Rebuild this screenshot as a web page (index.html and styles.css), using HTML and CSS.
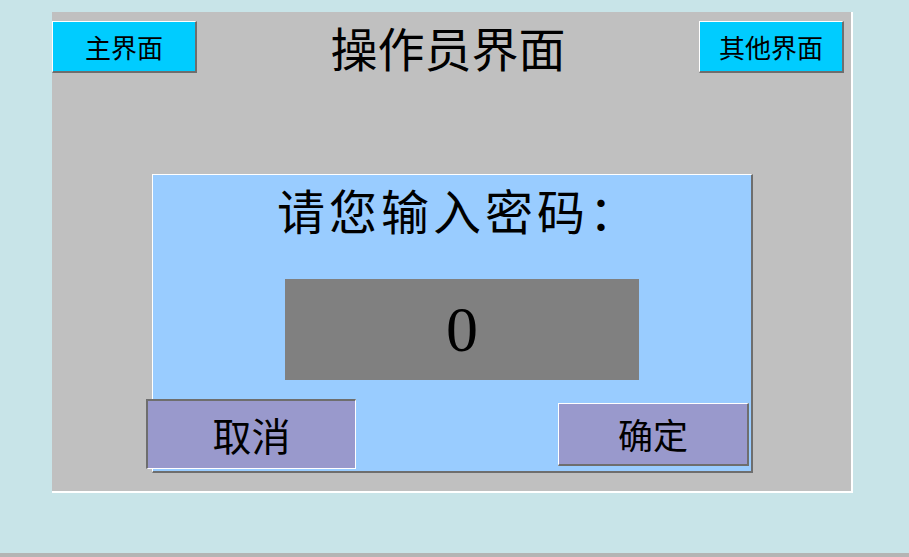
FILE: index.html
```html
<!DOCTYPE html>
<html lang="zh-CN">
<head>
<meta charset="utf-8">
<title>操作员界面</title>
<link rel="stylesheet" href="styles.css">
</head>
<body>
<div class="screen">
  <div class="panel">
    <div class="header">
      <button class="nav-btn">主界面</button>
      <h1 class="title">操作员界面</h1>
      <button class="nav-btn">其他界面</button>
    </div>
    <div class="dialog">
      <div class="dialog-title">请您输入密码：</div>
      <div class="pwd-box">0</div>
      <div class="actions">
        <button class="btn btn-cancel">取消</button>
        <button class="btn btn-ok">确定</button>
      </div>
    </div>
  </div>
</div>
<div class="footer"></div>
</body>
</html>
```
FILE: styles.css
```css
html, body {
  margin: 0;
  padding: 0;
}
body {
  background: #C8E4E8;
  width: 909px;
  height: 557px;
  overflow: hidden;
  font-family: "Noto Sans CJK SC", "Liberation Serif", serif;
  color: #000;
}
.screen {
  height: 553px;
  box-sizing: border-box;
  padding: 12px 0 0 52px;
}
.footer {
  height: 4px;
  background: #B4B4B4;
}
.panel {
  box-sizing: border-box;
  width: 801px;
  height: 481px;
  background: #C0C0C0;
  border-right: 2px solid #fff;
  border-bottom: 2px solid #fff;
  padding: 9px 7px 0 0;
}
.header {
  display: flex;
  justify-content: space-between;
  align-items: center;
  height: 52px;
}
.nav-btn {
  box-sizing: border-box;
  width: 145px;
  height: 52px;
  margin: 0;
  padding: 0;
  background: #00CCFF;
  border-top: 1px solid #fff;
  border-left: 1px solid #fff;
  border-right: 2px solid #6e6e6e;
  border-bottom: 2px solid #6e6e6e;
  font-family: "Noto Sans CJK SC", sans-serif;
  font-size: 26px;
  line-height: 1;
  color: #000;
}
.title {
  margin: 0;
  font-weight: normal;
  font-size: 47px;
  line-height: 52px;
  letter-spacing: 0;
}
.dialog {
  box-sizing: border-box;
  width: 601px;
  height: 299px;
  margin: 101px 0 0 100px;
  background: #99CCFF;
  border-top: 1px solid #fff;
  border-left: 1px solid #fff;
  border-right: 2px solid #6e6e6e;
  border-bottom: 2px solid #6e6e6e;
  padding-top: 10px;
}
.dialog-title {
  text-align: center;
  font-size: 48px;
  line-height: 48px;
  letter-spacing: 4px;
  padding-left: 14px;
}
.pwd-box {
  width: 354px;
  height: 101px;
  margin: 46px 0 0 132px;
  background: #808080;
  display: flex;
  align-items: center;
  justify-content: center;
  font-family: "Liberation Serif", serif;
  font-size: 64px;
  line-height: 1;
}
.actions {
  display: flex;
  justify-content: space-between;
  align-items: center;
  margin: 19px 2px 0 -7px;
}
.btn {
  box-sizing: border-box;
  margin: 0;
  padding: 0;
  background: #9999CC;
  font-family: "Noto Sans CJK SC", sans-serif;
  color: #000;
  line-height: 1;
}
.btn-cancel {
  width: 210px;
  height: 70px;
  border-top: 2px solid #6e6e6e;
  border-left: 2px solid #6e6e6e;
  border-right: 1px solid #fff;
  border-bottom: 1px solid #fff;
  font-size: 39px;
}
.btn-ok {
  width: 191px;
  height: 63px;
  border-top: 1px solid #fff;
  border-left: 1px solid #fff;
  border-right: 2px solid #6e6e6e;
  border-bottom: 2px solid #6e6e6e;
  font-size: 35px;
}
```
